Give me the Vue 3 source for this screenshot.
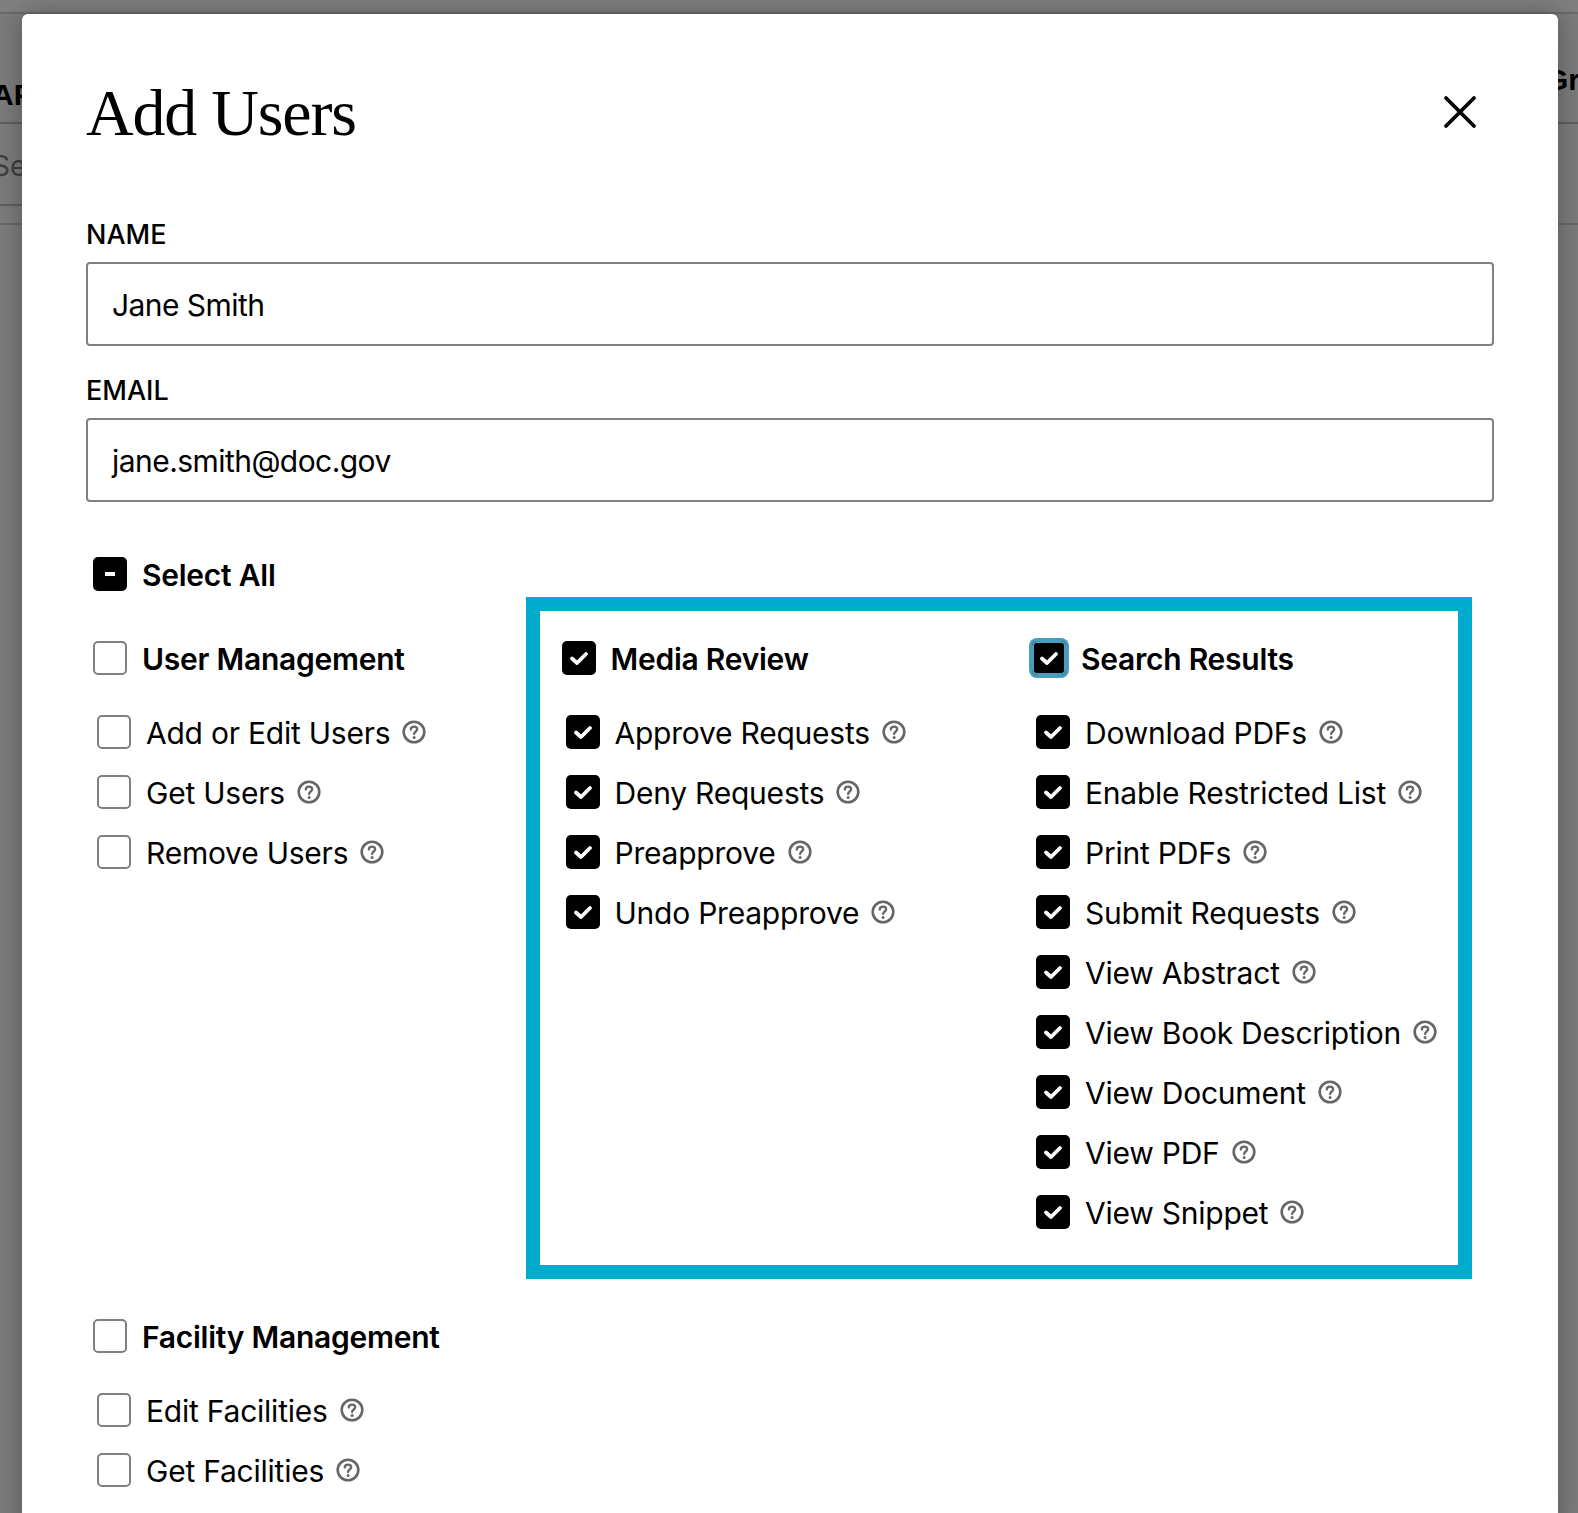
<script setup>
const groups = [
  { title: "User Management", checked: false, items: ["Add or Edit Users", "Get Users", "Remove Users"] },
  { title: "Media Review", checked: true, items: ["Approve Requests", "Deny Requests", "Preapprove", "Undo Preapprove"] },
  {
    title: "Search Results",
    checked: true,
    focused: true,
    items: [
      "Download PDFs",
      "Enable Restricted List",
      "Print PDFs",
      "Submit Requests",
      "View Abstract",
      "View Book Description",
      "View Document",
      "View PDF",
      "View Snippet",
    ],
  },
  { title: "Facility Management", checked: false, items: ["Edit Facilities", "Get Facilities"] },
];
</script>

<template>
  <div class="page">
    <div class="topbar"></div>
    <div class="backdrop-head">
      <span class="bg-title">AP</span>
      <span class="bg-title">Gr</span>
    </div>
    <div class="backdrop-search"><span>Se</span></div>
    <div class="backdrop-rule"></div>

    <div class="modal">
      <div class="modal-head">
        <h1>Add Users</h1>
        <svg class="close" width="34" height="34" viewBox="0 0 34 34">
          <path d="M3 3 L31 31 M31 3 L3 31" stroke="#000" stroke-width="3.8" stroke-linecap="round" fill="none" />
        </svg>
      </div>

      <label class="field-label">NAME</label>
      <div class="input">Jane Smith</div>
      <label class="field-label">EMAIL</label>
      <div class="input">jane.smith@doc.gov</div>

      <div class="perms">
        <div class="group-row select-all">
          <span class="box on">
            <svg width="34" height="34" viewBox="0 0 34 34"><rect x="12" y="15" width="10" height="4" fill="#fff" /></svg>
          </span>
          <span class="group-label">Select All</span>
        </div>

        <div class="grid">
          <div v-for="g in groups" :key="g.title" class="group">
            <div class="group-row">
              <span class="box" :class="{ on: g.checked, focus: g.focused }">
                <svg v-if="g.checked" width="34" height="34" viewBox="0 0 34 34">
                  <path d="M10 17.5 L15 22 L24 13" stroke="#fff" stroke-width="3.8" stroke-linecap="round" stroke-linejoin="round" fill="none" />
                </svg>
              </span>
              <span class="group-label">{{ g.title }}</span>
            </div>
            <ul>
              <li v-for="item in g.items" :key="item">
                <span class="box" :class="{ on: g.checked }">
                  <svg v-if="g.checked" width="34" height="34" viewBox="0 0 34 34">
                    <path d="M10 17.5 L15 22 L24 13" stroke="#fff" stroke-width="3.8" stroke-linecap="round" stroke-linejoin="round" fill="none" />
                  </svg>
                </span>
                <span class="item-label">{{ item }}</span>
                <svg class="help" width="24" height="24" viewBox="0 0 24 24">
                  <circle cx="12" cy="12" r="10.3" stroke="#666" stroke-width="2.6" fill="none" />
                  <path d="M8.8 9.6 C8.8 7.6 10.2 6.6 12 6.6 C13.9 6.6 15.2 7.7 15.2 9.3 C15.2 11.4 12.1 11.6 12.1 14" stroke="#666" stroke-width="2.3" stroke-linecap="round" fill="none" />
                  <circle cx="12.1" cy="17.4" r="1.5" fill="#666" />
                </svg>
              </li>
            </ul>
          </div>
        </div>
      </div>

      <div class="highlight"></div>
    </div>
  </div>
</template>

<style>
html,
body {
  margin: 0;
  overflow: hidden;
}
</style>

<style scoped>
.page {
  position: relative;
  width: 1578px;
  height: 1513px;
  overflow: hidden;
  background: #7c7c7c;
  font-family: Inter, "Liberation Sans", sans-serif;
  color: #000;
}

.topbar {
  height: 12px;
  background: #808080;
  border-bottom: 2px solid #6a6a6a;
}

.backdrop-head {
  display: flex;
  justify-content: space-between;
  height: 108px;
  margin-left: -8px;
  margin-right: -2px;
  border-bottom: 2px solid #5f5f5f;
}

.bg-title {
  font-family: "Liberation Sans", sans-serif;
  font-weight: 700;
  font-size: 30px;
  line-height: 34px;
  padding-top: 64px;
}

.bg-title:last-child {
  padding-top: 49px;
}

.backdrop-search {
  height: 80px;
  margin-left: -8px;
  border-bottom: 2px solid #5f5f5f;
  width: 100px;
  font-size: 28px;
  line-height: 84px;
  color: #3f3f3f;
}

.backdrop-rule {
  height: 17px;
  border-bottom: 2px solid #6a6a6a;
}

.modal {
  position: absolute;
  left: 22px;
  top: 14px;
  width: 1536px;
  height: 1520px;
  box-sizing: border-box;
  padding: 56px 64px 0;
  background: #fff;
  border-radius: 6px;
  box-shadow: 0 0 28px rgba(0, 0, 0, 0.32);
}

.modal-head {
  display: flex;
  align-items: center;
  justify-content: space-between;
  height: 86px;
  margin-bottom: 63px;
}

h1 {
  margin: 0;
  font-family: "Liberation Serif", serif;
  font-weight: 400;
  font-size: 66px;
  letter-spacing: -1.2px;
  line-height: 86px;
}

.close {
  margin-right: 17px;
  margin-bottom: 2px;
}

.field-label {
  display: block;
  font-size: 27px;
  font-weight: 500;
  line-height: 32px;
  margin-bottom: 11px;
}

.input {
  box-sizing: border-box;
  height: 84px;
  margin-bottom: 29px;
  padding: 0 24px;
  border: 2px solid #808080;
  border-radius: 4px;
  font-size: 30px;
  letter-spacing: -0.55px;
  line-height: 82px;
}

.perms {
  margin-left: 7px;
  margin-top: 55px;
}

.group-row {
  display: flex;
  align-items: center;
  gap: 15px;
  height: 34px;
  font-size: 30px;
  font-weight: 600;
  letter-spacing: -0.25px;
}

.group-label {
  padding-top: 2px;
}

.select-all {
  margin-bottom: 50px;
}

.grid {
  display: grid;
  grid-template-columns: 468.5px 470.5px 469.5px;
  row-gap: 90px;
}

ul {
  list-style: none;
  margin: 40px 0 0 4px;
  padding: 0;
  display: flex;
  flex-direction: column;
  gap: 26px;
}

li {
  display: flex;
  align-items: center;
  height: 34px;
  font-size: 30px;
  letter-spacing: -0.23px;
}

.box {
  flex: none;
  box-sizing: border-box;
  width: 34px;
  height: 34px;
  border: 2px solid #808080;
  border-radius: 5px;
  background: #fff;
}

.box.on {
  border: 0;
  background: #000;
}

.box svg {
  display: block;
}

.box.focus {
  box-shadow: 0 0 0 3px #4a9cbd, inset 0 0 0 2px #4a9cbd;
}

.item-label {
  margin-left: 15px;
  margin-right: 12px;
  padding-top: 2px;
}

.help {
  flex: none;
}

.highlight {
  position: absolute;
  left: 504px;
  top: 583px;
  width: 946px;
  height: 682px;
  box-sizing: border-box;
  border: 14px solid #00acce;
  pointer-events: none;
}
</style>
